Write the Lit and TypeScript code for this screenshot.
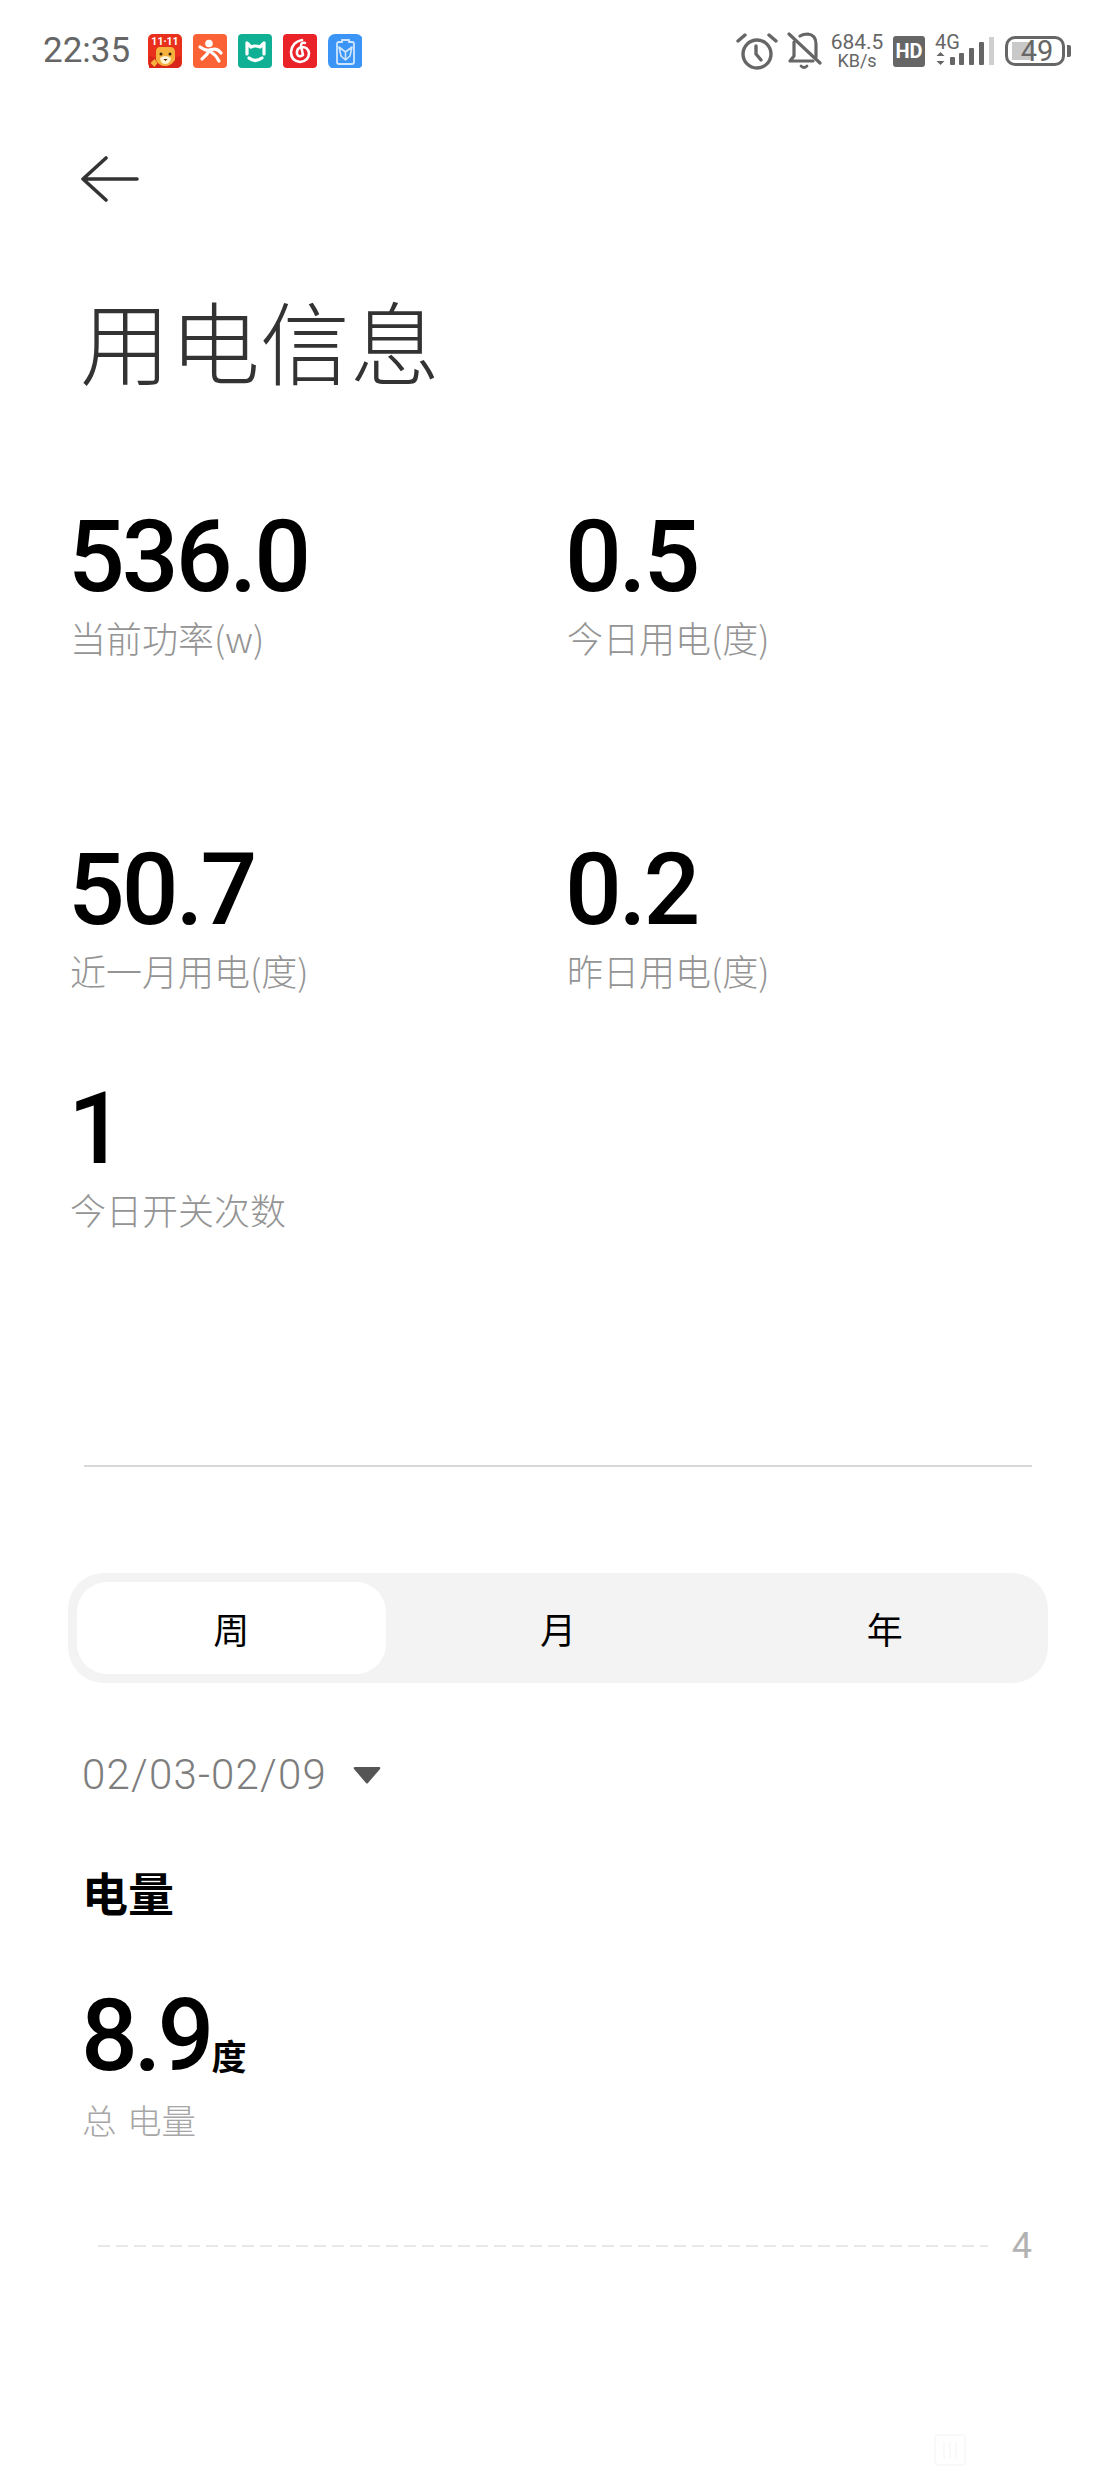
import { LitElement, html, css, svg } from 'lit';
import { customElement, state } from 'lit/decorators.js';

const appIcons = [
  svg`<rect width="34" height="34" rx="5" fill="#e8301c"/>
    <path d="M1 34 V22 L9 24 L25 24 L33 22 V29 Q33 34 28 34 Z" fill="#d9261a"/>
    <path d="M8 18 Q8 13 12 13 L22 13 Q27 13 27 18 L27 26 Q23 32 17 32 Q11 32 8 26 Z" fill="#f6b23e"/>
    <path d="M12 24 Q17 20 23 24 Q22 30 17 30 Q13 30 12 24 Z" fill="#fff3d6"/>
    <circle cx="13" cy="20" r="1.5" fill="#3a2208"/><circle cx="22" cy="20" r="1.5" fill="#3a2208"/>
    <path d="M15.500 25 h4 l-2 2 z" fill="#3a2208"/>
    <path d="M2.500 29 l4-4 3 4 -3 4 z" fill="#f6b23e"/>
    <text x="17" y="10.500" text-anchor="middle" font-size="10.500" font-weight="700" fill="#fff" font-family="Roboto, sans-serif">11·11</text>`,
  svg`<rect width="34" height="34" rx="4" fill="#fb6236"/>
    <circle cx="16" cy="9.500" r="3.800" fill="#fff"/>
    <path d="M7 13 Q14 18 19 15.500 Q24 14 28 19" fill="none" stroke="#fff" stroke-width="3.200" stroke-linecap="round"/>
    <path d="M17 16 Q13 22 9 25 M18 18 Q23 21 26 27" fill="none" stroke="#fff" stroke-width="3.200" stroke-linecap="round"/>`,
  svg`<rect width="34" height="34" rx="4" fill="#0fb094"/>
    <path d="M9 9 L13 13 Q17 11 22 13 L26 9 L26 20 M9 9 L9 20 M11 24 Q17 29 24 24" fill="none" stroke="#fff" stroke-width="3.200" stroke-linecap="round" stroke-linejoin="round"/>`,
  svg`<rect width="34" height="34" rx="4" fill="#ea2328"/>
    <path d="M19 6 Q9 8 8 18 Q8 27 17 28 Q26 27 26 19 Q25 13 19 13 Q13 14 14 20 Q16 24 20 21 L18 12 Q18 8 22 9" fill="none" stroke="#fff" stroke-width="2.600" stroke-linecap="round" stroke-linejoin="round"/>`,
  svg`<rect width="35" height="35" rx="7" fill="#3a95f7"/>
    <path d="M14 6 h7 v2 h3 q2 0 2 2 v18 q0 2-2 2 h-13 q-2 0-2-2 v-18 q0-2 2-2 h3 z" fill="none" stroke="#cfe5fd" stroke-width="1.800"/>
    <path d="M11 13 L17.500 18 L24 13 L22 22 L17.500 26 L13 22 Z M17.500 18 V26" fill="none" stroke="#cfe5fd" stroke-width="1.600" stroke-linejoin="round"/>`,
];

interface Stat {
  value: string;
  label: string;
}

@customElement('app-root')
export class AppRoot extends LitElement {
  static styles = css`
    :host {
      display: block;
      width: 1116px;
      height: 2480px;
      background: #fff;
      font-family: "Noto Sans CJK SC", "Noto Sans", sans-serif;
      overflow: hidden;
      position: relative;
    }

    .status {
      height: 102px;
      display: flex;
      align-items: center;
      justify-content: space-between;
      padding: 0 45px 0 43px;
      box-sizing: border-box;
      color: #666;
    }
    .status-left,
    .status-right {
      display: flex;
      align-items: center;
    }
    .time {
      font: 400 35px/40px Roboto, sans-serif;
      width: 105px;
    }
    .apps {
      display: flex;
      gap: 11px;
    }
    .apps svg {
      width: 34px;
      height: 34px;
      display: block;
    }
    .speed {
      width: 54px;
      margin: 0 9px 0 7px;
      font-family: Roboto, sans-serif;
      text-align: center;
      white-space: nowrap;
    }
    .speed div:first-child {
      font-size: 21px;
      line-height: 20px;
    }
    .speed div:last-child {
      font-size: 18px;
      line-height: 18px;
    }
    .hd {
      width: 32px;
      height: 31px;
      background: #666;
      color: #fff;
      border-radius: 3px;
      font: 700 20px/31px Roboto, sans-serif;
      text-align: center;
      margin-right: 10px;
    }
    .net {
      position: relative;
      width: 60px;
      height: 32px;
      margin-right: 10px;
    }
    .net span {
      position: absolute;
      left: 0;
      top: -2px;
      font: 400 20px/18px Roboto, sans-serif;
    }
    .net svg {
      position: absolute;
      left: 0;
      top: 0;
    }
    .battery {
      display: flex;
      align-items: center;
      gap: 2px;
    }
    .battery-body {
      position: relative;
      width: 60px;
      height: 30px;
      box-sizing: border-box;
      border: 3px solid #666;
      border-radius: 10px;
      font: 400 29px/24px Roboto, sans-serif;
      text-align: center;
    }
    .battery-body i {
      position: absolute;
      left: 4px;
      top: 3px;
      width: 20px;
      height: 18px;
      background: #c9c9c9;
    }
    .battery-body span {
      position: relative;
      left: 2px;
    }
    .battery-nub {
      width: 4px;
      height: 12px;
      background: #666;
      border-radius: 0 2px 2px 0;
    }

    .back {
      display: block;
      margin: 54px 0 0 81px;
    }
    h1 {
      margin: 87px 0 0 80px;
      font-size: 90px;
      line-height: 100px;
      font-weight: 300;
      color: #333;
    }

    .stats {
      display: grid;
      grid-template-columns: 497px 1fr;
      grid-template-rows: 333px 239px 387px;
      margin-top: 117px;
      padding-left: 70px;
    }
    .stat-wide {
      grid-column: 1 / 3;
    }
    .num {
      font: 500 100px/96px Roboto, sans-serif;
      color: #000;
      letter-spacing: -3px;
      margin: 3px 0 0 -2px;
    }
    .label {
      font-size: 36px;
      line-height: 50px;
      color: #949494;
      font-weight: 300;
      margin-top: 7px;
    }

    .divider {
      height: 2px;
      background: #d8d8d8;
      margin: 0 84px;
    }

    .tabs {
      display: grid;
      grid-template-columns: repeat(3, 1fr);
      height: 110px;
      margin: 106px 68px 0;
      border-radius: 36px;
      background: #f3f3f3;
    }
    .tab {
      margin: 9px;
      border-radius: 30px;
      display: flex;
      align-items: center;
      justify-content: center;
      font-size: 36px;
      color: #000;
      cursor: pointer;
    }
    .tab.active {
      background: #fff;
    }

    .range {
      display: flex;
      align-items: center;
      gap: 26px;
      margin: 67px 0 0 82px;
      font: 300 42px/50px Roboto, sans-serif;
      color: #7d7d7d;
      letter-spacing: 1.200px;
    }

    h2 {
      margin: 61px 0 0 82px;
      font-size: 46px;
      line-height: 60px;
      font-weight: 700;
      color: #000;
    }
    .total {
      display: flex;
      align-items: baseline;
      margin: 65px 0 0 81px;
      line-height: 100px;
    }
    .total .num {
      line-height: 100px;
      letter-spacing: -4px;
      margin: 0;
    }
    .total b {
      font-size: 35px;
      line-height: 40px;
      font-weight: 700;
      margin-left: 1px;
      color: #000;
    }
    .total-label {
      margin: 11px 0 0 82px;
      font-size: 34.500px;
      line-height: 44px;
      color: #a6a6a6;
      font-weight: 300;
      word-spacing: 3px;
    }

    .axis {
      display: flex;
      align-items: center;
      margin: 85px 0 0 98px;
      padding-right: 84px;
      height: 40px;
      gap: 24px;
    }
    .dash {
      flex: 1;
      height: 2px;
      background: repeating-linear-gradient(90deg, #e8e8e8 0 12px, transparent 12px 18px);
    }
    .axis span {
      font: 400 36px/40px Roboto, sans-serif;
      color: #b2b2b2;
    }
    .mark {
      position: absolute;
      left: 933px;
      top: 2433px;
      opacity: 0.02;
    }
  `;

  @state() stats: Stat[] = [
    { value: '536.0', label: '当前功率(w)' },
    { value: '0.5', label: '今日用电(度)' },
    { value: '50.7', label: '近一月用电(度)' },
    { value: '0.2', label: '昨日用电(度)' },
    { value: '1', label: '今日开关次数' },
  ];

  @state() tabs = ['周', '月', '年'];
  @state() active = 0;

  renderStatus() {
    return html`
      <div class="status">
        <div class="status-left">
          <div class="time">22:35</div>
          <div class="apps">
            ${appIcons.map((i) => html`<svg viewBox="0 0 34 34">${i}</svg>`)}
          </div>
        </div>
        <div class="status-right">
          <svg width="42" height="38" viewBox="0 0 42 38" fill="none" stroke="#666" stroke-width="3.400" stroke-linecap="round">
            <circle cx="21" cy="22" r="14"/>
            <path d="M20 14 V22 L25 28"/>
            <path d="M2 9 L9 3 M40 9 L33 3"/>
          </svg>
          <svg style="margin-left:9px" width="36" height="38" viewBox="0 0 36 38" fill="none" stroke="#666" stroke-width="3.200" stroke-linecap="round" stroke-linejoin="round">
            <path d="M13 4 Q16 2 21 2 Q29 3 29 12 V25"/>
            <path d="M7 10 V24 L3 29 H26"/>
            <path d="M2 2 L33 31"/>
            <path d="M14 34 Q17 37 20 34" stroke-width="2.600"/>
          </svg>
          <div class="speed"><div>684.5</div><div>KB/s</div></div>
          <div class="hd">HD</div>
          <div class="net">
            <span>4G</span>
            <svg width="60" height="32" viewBox="0 0 60 32" fill="#666">
              <path d="M5.500 17 L9.500 21 H1.500 Z M5.500 30 L1.500 26 H9.500 Z"/>
              <rect x="15" y="22" width="5" height="8" rx="1"/>
              <rect x="24" y="18" width="5" height="12" rx="1"/>
              <rect x="34" y="13" width="5" height="17" rx="1"/>
              <rect x="44" y="7" width="5" height="23" rx="1"/>
              <rect x="54" y="2" width="5" height="28" fill="#cfcfcf"/>
            </svg>
          </div>
          <div class="battery">
            <div class="battery-body"><i></i><span>49</span></div>
            <div class="battery-nub"></div>
          </div>
        </div>
      </div>
    `;
  }

  render() {
    return html`
      ${this.renderStatus()}
      <svg class="back" width="58" height="46" viewBox="0 0 58 46" fill="none" stroke="#333" stroke-width="3.600" stroke-linecap="round" stroke-linejoin="round">
        <path d="M25 2 L2 23 L25 44 M2 23 H56"/>
      </svg>
      <h1>用电信息</h1>

      <div class="stats">
        ${this.stats.map(
          (s, i) => html`
            <div class="stat ${i === 4 ? 'stat-wide' : ''}">
              <div class="num">${s.value}</div>
              <div class="label">${s.label}</div>
            </div>
          `
        )}
      </div>

      <div class="divider"></div>

      <div class="tabs">
        ${this.tabs.map(
          (t, i) => html`
            <div class="tab ${i === this.active ? 'active' : ''}" @click=${() => (this.active = i)}>${t}</div>
          `
        )}
      </div>

      <div class="range">
        <span>02/03-02/09</span>
        <svg width="28" height="18" viewBox="0 0 28 18"><path d="M2 1 H26 Q28 1 27 3 L15 17 Q14 18 13 17 L1 3 Q0 1 2 1 Z" fill="#555"/></svg>
      </div>

      <h2>电量</h2>
      <div class="total">
        <div class="num">8.9</div>
        <b>度</b>
      </div>
      <div class="total-label">总 电量</div>

      <div class="axis">
        <div class="dash"></div>
        <span>4</span>
      </div>

      <svg class="mark" width="34" height="34" viewBox="0 0 34 34" fill="none" stroke="#000" stroke-width="2">
        <rect x="2" y="2" width="30" height="30" rx="3"/>
        <path d="M11 9 V26 M17 9 V26 M23 9 V26"/>
      </svg>
    `;
  }
}
